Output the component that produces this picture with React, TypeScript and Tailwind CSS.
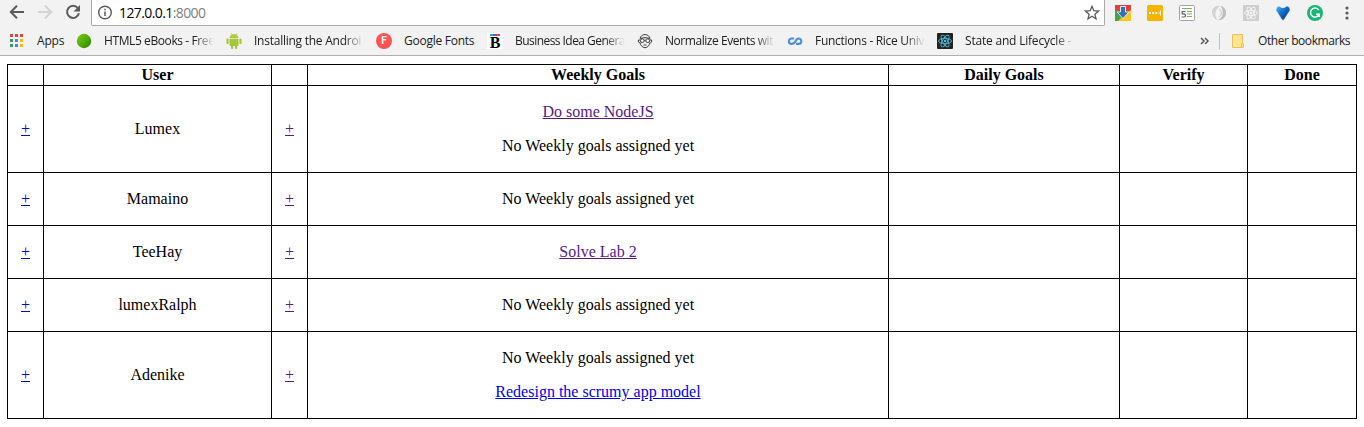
import type { ReactNode } from "react";

const UI_FONT = "font-['Open_Sans','Noto_Sans',sans-serif]";

function Icon({ children, size = 16 }: { children: ReactNode; size?: number }) {
  return (
    <svg width={size} height={size} viewBox="0 0 16 16" className="block shrink-0" fill="none">
      {children}
    </svg>
  );
}

const AppsIcon = () => (
  <Icon>
    {["#ea4335", "#ea4335", "#ea4335", "#34a05f", "#4285f4", "#fbbc05", "#34a05f", "#4285f4", "#fbbc05"].map((c, i) => (
      <rect key={i} x={2 + (i % 3) * 5} y={1 + Math.floor(i / 3) * 5} width="3" height="3" fill={c} />
    ))}
  </Icon>
);

const GreenBall = () => (
  <Icon>
    <defs>
      <linearGradient id="ball" x1="0" y1="0" x2="1" y2="1">
        <stop offset="0" stopColor="#7dcc16" />
        <stop offset="0.5" stopColor="#54ad09" />
        <stop offset="1" stopColor="#288000" />
      </linearGradient>
    </defs>
    <circle cx="8" cy="8" r="7.2" fill="url(#ball)" />
  </Icon>
);

const AndroidIcon = () => (
  <Icon>
    <g fill="#a4c639">
      <path d="M3.500 5C3.700 2.700 5.600 1.200 8 1.200S12.300 2.700 12.500 5Z" />
      <path d="M5 .2l1.300 2M11 .2l-1.300 2" stroke="#a4c639" strokeWidth=".8" />
      <path d="M3.500 5.800h9V12a1 1 0 0 1-1 1h-7a1 1 0 0 1-1-1Z" />
      <rect x="0.400" y="5.500" width="2.200" height="5.700" rx="1.100" />
      <rect x="13.400" y="5.500" width="2.200" height="5.700" rx="1.100" />
      <rect x="5" y="11" width="2.200" height="5" rx="1" />
      <rect x="8.900" y="11" width="2.200" height="5" rx="1" />
    </g>
    <path d="M5.700 3h.8v.8h-.8ZM9.500 3h.8v.8h-.8Z" fill="#f2f2f2" />
  </Icon>
);

const FontsIcon = () => (
  <span className="flex size-4 items-center justify-center rounded-full bg-[#ff5252] font-['Roboto',sans-serif] text-[10px] leading-none font-bold text-white">
    F
  </span>
);

const BIcon = () => (
  <span className="flex size-4 flex-col items-center bg-white pt-px">
    <span className="flex h-0.5 w-2.5 shrink-0">
      <span className="w-[3px] bg-[#27a9e8]" />
      <span className="w-[3px] bg-[#4568c8]" />
      <span className="w-[4px] bg-[#ee4352]" />
    </span>
    <span className="font-['Liberation_Serif',serif] text-[16px] leading-[14px] font-bold text-black">B</span>
  </span>
);

const FaceIcon = () => (
  <Icon>
    <g stroke="#3c3c3c" strokeWidth="1">
      <path d="M3 5.500C3.600 3 5.300 1.600 8 1.600s4.400 1.400 5 3.900M3 9.500c.6 3 2.500 5.200 5 5.200s4.400-2.200 5-5.200" />
      <path d="M3 5.400Q8 3.800 13 5.400" />
      <circle cx="5.300" cy="7.700" r="1.900" />
      <circle cx="10.700" cy="7.700" r="1.900" />
      <path d="M7.300 7.400h1.400M3.300 7H1.400v2l1.500 1M12.700 7h1.900v2l-1.500 1M6.500 12h3" />
    </g>
  </Icon>
);

const InfinityIcon = () => (
  <Icon>
    <path
      d="M7.200 5.500H4.600a2.700 2.700 0 0 0 0 5.400C6.800 10.900 8 9.500 8.700 8.100 9.400 6.500 10.300 5.500 11.600 5.500a2.700 2.700 0 0 1 0 5.400H9"
      stroke="#4d90d6"
      strokeWidth="2.200"
    />
  </Icon>
);

function Atom({ color, background, r = 0 }: { color: string; background: string; r?: number }) {
  return (
    <Icon>
      <rect width="16" height="16" rx={r} fill={background} />
      <g stroke={color} strokeWidth=".9">
        <ellipse cx="8" cy="8" rx="6.500" ry="2.600" />
        <ellipse cx="8" cy="8" rx="6.500" ry="2.600" transform="rotate(60 8 8)" />
        <ellipse cx="8" cy="8" rx="6.500" ry="2.600" transform="rotate(120 8 8)" />
      </g>
      <circle cx="8" cy="8" r="1.300" fill={color} />
    </Icon>
  );
}

const bookmarks: { label: string; icon: ReactNode; width: string; tracking: string; fade?: boolean }[] = [
  { label: "HTML5 eBooks - Free", icon: <GreenBall />, width: "w-[110px]", tracking: "tracking-[-0.4px]", fade: true },
  { label: "Installing the Androi", icon: <AndroidIcon />, width: "w-[110px]", tracking: "tracking-[-0.25px]", fade: true },
  { label: "Google Fonts", icon: <FontsIcon />, width: "w-[71px]", tracking: "tracking-[-0.25px]" },
  { label: "Business Idea Genera", icon: <BIcon />, width: "w-[110px]", tracking: "tracking-[-0.55px]", fade: true },
  { label: "Normalize Events wit", icon: <FaceIcon />, width: "w-[110px]", tracking: "tracking-[-0.45px]", fade: true },
  { label: "Functions - Rice Univ", icon: <InfinityIcon />, width: "w-[110px]", tracking: "tracking-[-0.3px]", fade: true },
  { label: "State and Lifecycle -", icon: <Atom color="#53b9d8" background="#222222" r={1} />, width: "w-[110px]", tracking: "tracking-[-0.2px]", fade: true },
];

function Extensions() {
  return (
    <div className="flex w-[259px] items-center gap-4 pl-[10px] pb-px">
      <Icon>
        <path d="M0 0h16v16H0Z" fill="#e53e38" />
        <path d="M0 4l8 7-5 5H0Z" fill="#3fa54a" />
        <path d="M16 5v11H3l5-5Z" fill="#fcc71b" />
        <path d="M5.500 1.500h5v5.500H14l-6 6.500L2 7h3.500Z" fill="#2e72ba" stroke="#dbe9f5" />
      </Icon>
      <Icon>
        <rect width="16" height="16" rx="1.500" fill="#f4b400" />
        <path d="M2 7h2v2H2ZM5.200 7h2v2h-2ZM8.400 7h2v2h-2ZM11.600 7.500h1.400v1h-1.400ZM13 5.500h1v5h-1Z" fill="#fff" />
      </Icon>
      <Icon>
        <rect x=".5" y=".5" width="15" height="15" rx="1" fill="#fcfcfc" stroke="#a5a5a5" />
        <path d="M3 3.500h10M8 6.500h5M8 9h5M8 11.500h5" stroke="#79b65b" />
        <path d="M6.500 6.500H3.200v2.400h1.600c2.200 0 2.200 3.100 0 3.100H2.600" stroke="#606060" strokeWidth="1.200" />
      </Icon>
      <Icon>
        <path d="M9 1C4.500 0 1 3.200 1 7.500c0 3.500 2.500 6.500 5.500 7.500C4.500 12 3.600 9 5 6c.8-2 2.300-3.500 4-5Z" fill="#d3d3d3" />
        <path d="M10 1c3 .7 5 3.400 5 6.800 0 4.500-3.500 7.800-8 7.200 4.500-2 6.500-6.500 3-14Z" fill="#bcbcbc" />
        <path d="M8 4c3 1.500 3 6 0 8" stroke="#c6c6c6" />
      </Icon>
      <Atom color="#f7f7f7" background="#cecece" />
      <Icon>
        <defs>
          <linearGradient id="gem" x1="0" y1="0" x2="1" y2="1">
            <stop offset="0" stopColor="#58bdf4" />
            <stop offset=".45" stopColor="#126ccc" />
            <stop offset="1" stopColor="#082a5c" />
          </linearGradient>
        </defs>
        <path
          d="M4 .8Q8 4.500 12 .8 16 2.500 15 5.400L9.300 14.500Q8 16.200 6.700 14.500L1 5.400Q0 2.500 4 .8Z"
          fill="url(#gem)"
          stroke="#fff"
          strokeWidth=".6"
        />
      </Icon>
      <Icon>
        <circle cx="8" cy="8" r="8" fill="#19b675" />
        <path d="M11.700 5A4.500 4.500 0 1 0 12.200 9.300H9M12.200 9v3" stroke="#fff" strokeWidth="1.500" />
      </Icon>
      <svg width="4" height="16" className="ml-1.5 shrink-0" fill="#5a5a5a">
        <circle cx="2" cy="3" r="1.600" />
        <circle cx="2" cy="8" r="1.600" />
        <circle cx="2" cy="13" r="1.600" />
      </svg>
    </div>
  );
}

function BrowserChrome() {
  return (
    <header className={`${UI_FONT} h-14 bg-[#f2f2f2] text-[#202020]`}>
      <div className="flex h-[26px]">
        <div className="flex w-[91px] gap-3 pt-1 pl-[9px]">
          <Icon>
            <path d="M15 8H2M8 1.800 1.800 8 8 14.200" stroke="#5a5a5a" strokeWidth="2" />
          </Icon>
          <Icon>
            <path d="M1 8h13M8 1.800 14.200 8 8 14.200" stroke="#d4d4d4" strokeWidth="2" />
          </Icon>
          <Icon>
            <path d="M12.800 4.200A6 6 0 1 0 13.900 9.200" stroke="#5a5a5a" strokeWidth="2" />
            <path d="M15 1v6.500H8.500Z" fill="#5a5a5a" />
          </Icon>
        </div>
        <div className="flex h-[26px] w-[1014px] items-center rounded-b-[2px] border border-t-0 border-[#a9a9a9] bg-white pl-[5px]">
          <Icon>
            <circle cx="8" cy="7.500" r="6.300" stroke="#5a5a5a" strokeWidth="1.400" />
            <path d="M8 6.500V11M8 3.800v1.500" stroke="#5a5a5a" strokeWidth="1.500" />
          </Icon>
          <span className="ml-[6px] text-[14px] leading-none tracking-[-0.6px] whitespace-nowrap text-black">
            127.0.0.1<span className="text-[#808080]">:8000</span>
          </span>
          <span className="mr-1 ml-auto">
            <Icon>
              <path d="m8 1.300 1.800 4.400 4.700.4-3.600 3.100 1.100 4.600L8 11.300l-4 2.500 1.100-4.600L1.500 6.100l4.700-.4Z" stroke="#5a5a5a" strokeWidth="1.300" />
            </Icon>
          </span>
        </div>
        <Extensions />
      </div>
      <div className="flex h-[30px] items-center border-b border-[#b0b0b0] pl-2 text-[12px] leading-4 whitespace-nowrap">
        <AppsIcon />
        <span className="ml-[13px] w-[39px] tracking-[-0.2px]">Apps</span>
        <nav className="flex w-[1124px] gap-3">
          {bookmarks.map((b) => (
            <div key={b.label} className="flex shrink-0 items-center gap-3">
              {b.icon}
              <span
                className={`${b.width} ${b.tracking} ${b.fade ? "[mask-image:linear-gradient(to_right,black_82%,transparent)]" : ""}`}
              >
                {b.label}
              </span>
            </div>
          ))}
        </nav>
        <svg width="10" height="8" viewBox="0 0 10 8" fill="none" stroke="#5a5a5a" strokeWidth="1.500">
          <path d="m1 1 3 3-3 3M5 1l3 3-3 3" />
        </svg>
        <span className="ml-[9px] h-4 w-px bg-[#c2c2c2]" />
        <svg width="12" height="14" viewBox="0 0 12 14" className="ml-3" fill="#ffe391" stroke="#e7c458">
          <path d="M.5.5h10v9h1v4H.5ZM9.500 13.500v-4h1" />
        </svg>
        <span className="ml-[14px] tracking-[-0.43px]">Other bookmarks</span>
      </div>
    </header>
  );
}

type Goal = { text: string; visited?: boolean; plain?: boolean };
const NONE: Goal = { text: "No Weekly goals assigned yet", plain: true };

const users: { name: string; goals: Goal[]; height: string }[] = [
  { name: "Lumex", goals: [{ text: "Do some NodeJS", visited: true }, NONE], height: "h-[87px]" },
  { name: "Mamaino", goals: [NONE], height: "h-[53px]" },
  { name: "TeeHay", goals: [{ text: "Solve Lab 2", visited: true }], height: "h-[53px]" },
  { name: "lumexRalph", goals: [NONE], height: "h-[53px]" },
  { name: "Adenike", goals: [NONE, { text: "Redesign the scrumy app model" }], height: "h-[87px]" },
];

const COLUMNS = "grid grid-cols-[36px_228px_36px_581px_231px_128px_109px]";

function Cell({ children }: { children?: ReactNode }) {
  return (
    <div className="flex flex-col items-center justify-center gap-4 border-r border-b border-black leading-[18px]">
      {children}
    </div>
  );
}

function Link({ children, visited }: { children: ReactNode; visited?: boolean }) {
  return (
    <a href="#" className={`underline ${visited ? "text-[#551a8b]" : "text-[#0000ee]"}`}>
      {children}
    </a>
  );
}

function GoalsTable() {
  return (
    <main className="mt-2 ml-[7px] w-[1350px] border-t border-l border-black font-['Liberation_Serif',serif] text-[16px] text-black">
      <div className={`${COLUMNS} h-[21px] font-bold`}>
        {["", "User", "", "Weekly Goals", "Daily Goals", "Verify", "Done"].map((h, i) => (
          <Cell key={i}>{h}</Cell>
        ))}
      </div>
      {users.map((u) => (
        <div key={u.name} className={`${COLUMNS} ${u.height}`}>
          <Cell>
            <Link>+</Link>
          </Cell>
          <Cell>{u.name}</Cell>
          <Cell>
            <Link visited>+</Link>
          </Cell>
          <Cell>
            {u.goals.map((g) =>
              g.plain ? (
                <p key={g.text}>{g.text}</p>
              ) : (
                <Link key={g.text} visited={g.visited}>
                  {g.text}
                </Link>
              ),
            )}
          </Cell>
          <Cell />
          <Cell />
          <Cell />
        </div>
      ))}
    </main>
  );
}

export default function App() {
  return (
    <div className="h-[427px] w-[1364px] overflow-hidden bg-white">
      <BrowserChrome />
      <GoalsTable />
    </div>
  );
}
